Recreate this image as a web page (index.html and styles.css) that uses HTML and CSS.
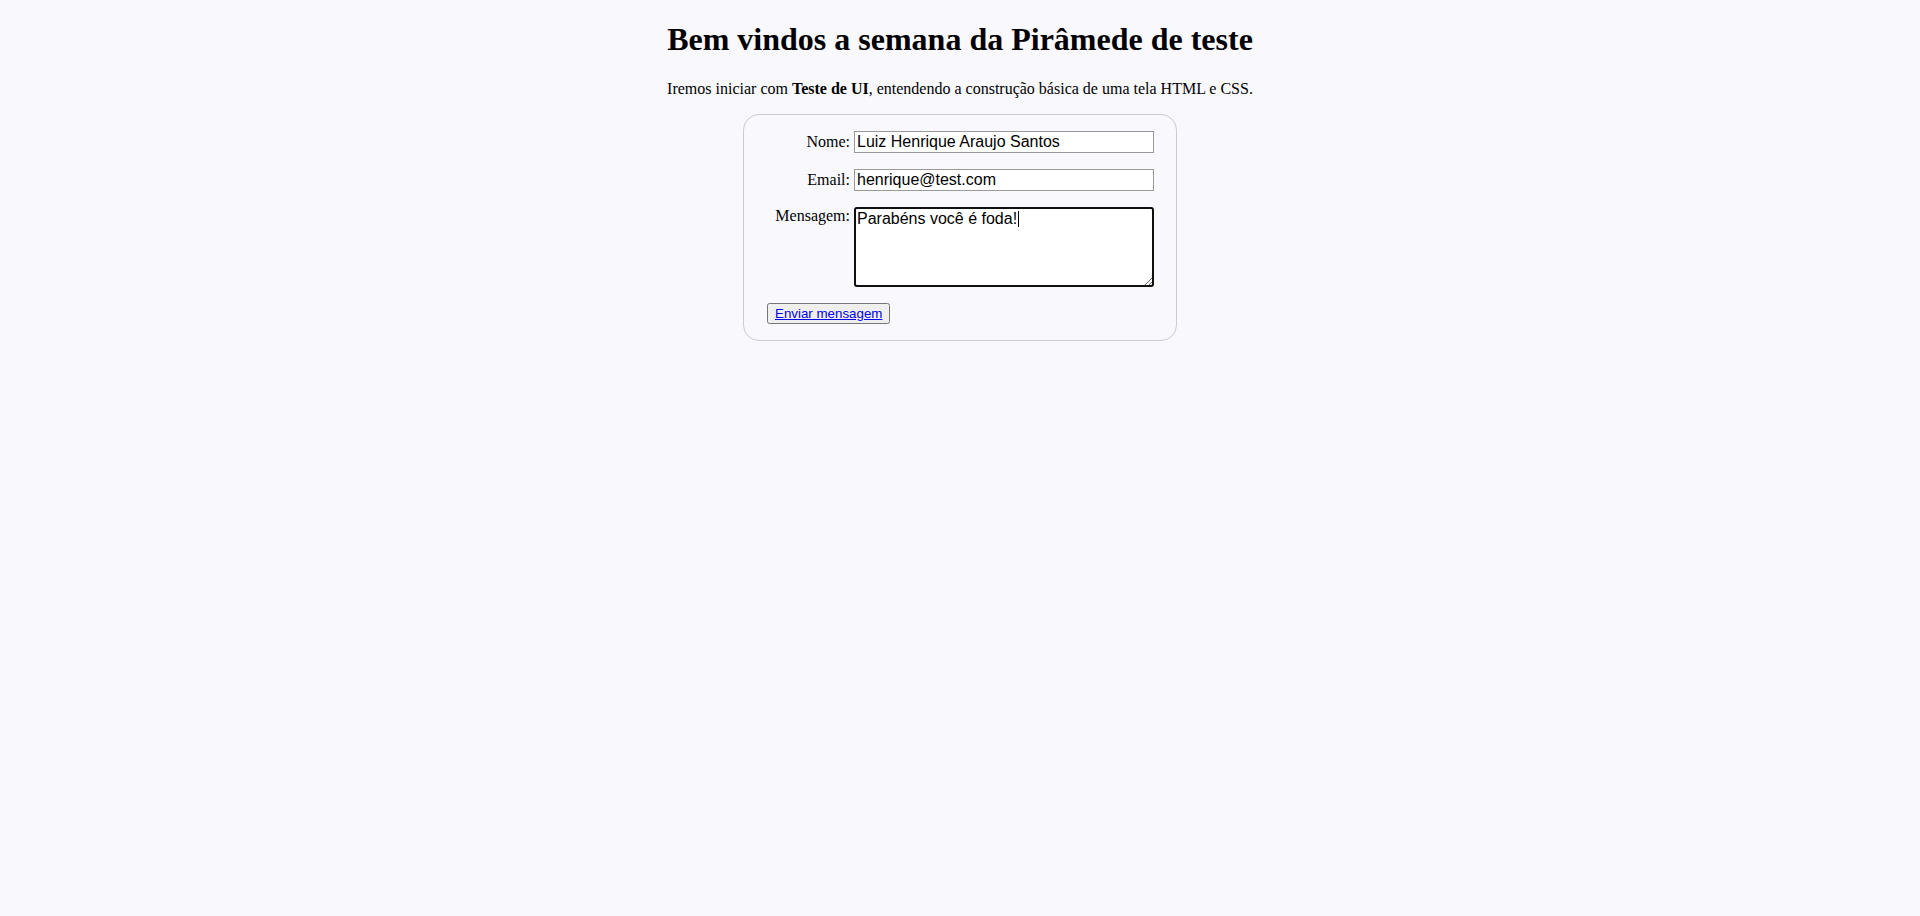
FILE: index.html
```html
<!DOCTYPE html>
<html lang="pt-BR">
<head>
<meta charset="utf-8">
<title>Pirâmide de teste</title>
<link rel="stylesheet" href="styles.css">
</head>
<body>
<h1 class="title">Bem vindos a semana da Pirâmede de teste</h1>
<p class="intro">Iremos iniciar com <strong>Teste de UI</strong>, entendendo a construção básica de uma tela HTML e CSS.</p>
<form class="contact-form" action="#">
  <ul class="fields">
    <li class="field">
      <label class="field-label" for="name">Nome:</label>
      <input class="field-input" type="text" id="name" value="Luiz Henrique Araujo Santos">
    </li>
    <li class="field">
      <label class="field-label" for="mail">Email:</label>
      <input class="field-input" type="email" id="mail" value="henrique@test.com">
    </li>
    <li class="field">
      <label class="field-label" for="msg">Mensagem:</label><span class="textarea-wrap"><textarea class="field-input field-textarea is-focused" id="msg">Parabéns você é foda!</textarea><span class="caret"></span></span>
    </li>
    <li class="field field-button">
      <button class="send-button" type="button"><a class="send-link" href="#">Enviar mensagem</a></button>
    </li>
  </ul>
</form>
</body>
</html>
```

FILE: styles.css
```css
html {
  background: #f8f8fd;
}

body {
  margin: 0 8px 8px;
  font-family: "Liberation Serif", "Times New Roman", serif;
  font-size: 16px;
  color: #000;
  text-align: center;
}

.title {
  font-size: 2em;
  margin: 0.67em 0;
}

.intro {
  margin: 1em 0;
}

.contact-form {
  margin: 0 auto;
  width: 400px;
  padding: 1em;
  border: 1px solid #ccc;
  border-radius: 1em;
  text-align: left;
}

.fields {
  list-style: none;
  padding: 0;
  margin: 0;
}

.field + .field {
  margin-top: 1em;
}

.field-label {
  display: inline-block;
  width: 90px;
  text-align: right;
}

.field-input {
  font: 1em "Liberation Sans", Arial, sans-serif;
  width: 300px;
  box-sizing: border-box;
  border: 1px solid #999;
  background: #fff;
  color: #000;
}

.textarea-wrap {
  position: relative;
  display: inline-block;
  vertical-align: top;
  margin-left: 4px;
}

.field-textarea {
  display: block;
  height: 5em;
}

.is-focused {
  outline: 2px solid #101010;
  outline-offset: -2px;
  border-radius: 3px;
}

.caret {
  position: absolute;
  left: 164px;
  top: 4px;
  width: 1px;
  height: 16px;
  background: #000;
}

.field-button {
  padding-left: 7px;
}

.send-button {
  font: 13.333px "Liberation Sans", Arial, sans-serif;
}

.send-link {
  color: #0000ee;
}
```
